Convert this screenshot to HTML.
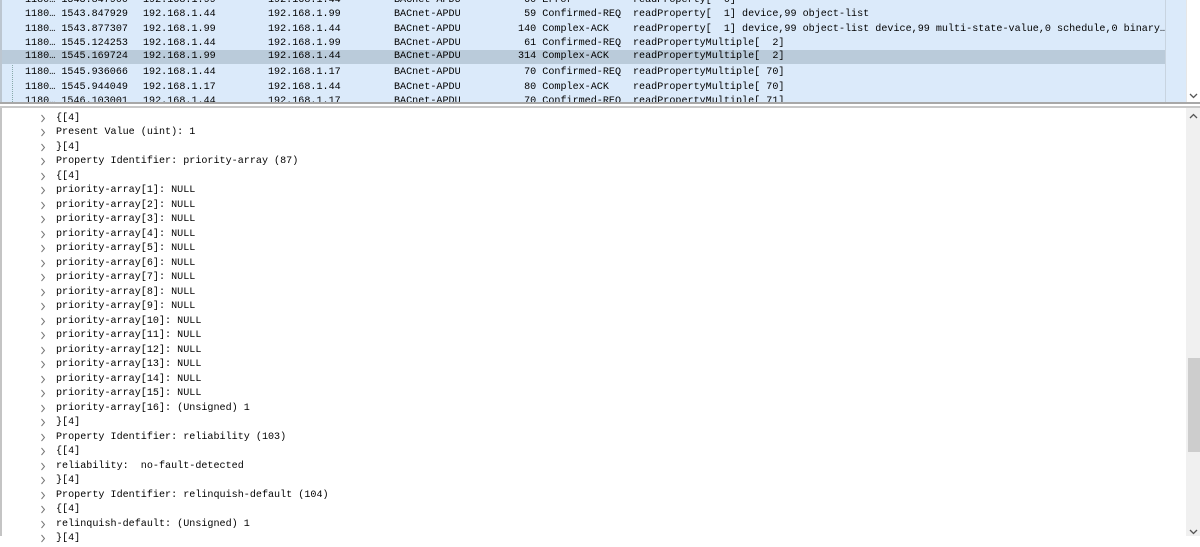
<!DOCTYPE html>
<html><head><meta charset="utf-8"><style>
*{margin:0;padding:0;box-sizing:border-box}
body{width:1200px;height:536px;overflow:hidden;background:#fff;font-family:"Liberation Mono","DejaVu Sans Mono",monospace;font-size:10.1px;color:#000;position:relative}
#top{position:absolute;left:0;top:0;width:1200px;height:104px;background:#dbeafa;overflow:hidden;border-left:2px solid #bcc6d0}
.r{position:absolute;left:0;width:1163px;height:14.5px;line-height:14.5px;white-space:pre}
.r.sel{background:#bacbda}
.r span{position:absolute;top:0}
#vsep{position:absolute;left:1163px;top:0;width:1px;height:102px;background:#c8d4e0}
#sb1{position:absolute;left:1186px;top:0;width:14px;height:102px;background:#fff;border-left:1px solid #e6e6e6}
#div1{position:absolute;left:0;top:102px;width:1200px;height:2px;background:#a8a8a8}
#div2{position:absolute;left:0;top:106px;width:1200px;height:2px;background:#c8c8c8}
#bot{position:absolute;left:0;top:108px;width:1200px;height:428px;border-left:2px solid #c4c4c4}
.l{position:absolute;left:56px;white-space:pre;line-height:14.5px}
.a{position:absolute;left:40px;width:8px;height:14.5px}
.a svg{position:absolute;left:0;top:2px}
#sb2{position:absolute;left:1186px;top:108px;width:14px;height:428px;background:#f0f0f0}
#thumb{position:absolute;left:1188px;top:358px;width:12px;height:94px;background:#cdcdcd}
.ar{position:absolute;left:1189px}
#dots{position:absolute;left:10px;top:52px;height:52px;border-left:1px dotted #8aa}
</style></head><body>
<div id="top">
<div id="dots"></div>
<div class="r" style="top:-6.5px"><span style="left:23px">1180… 1543.847900</span><span style="left:141px">192.168.1.99</span><span style="left:266px">192.168.1.44</span><span style="left:392px">BACnet-APDU</span><span style="left:516px"> 60 Error</span><span style="left:631px">readProperty[  0]</span></div>
<div class="r" style="top:8px"><span style="left:23px">1180… 1543.847929</span><span style="left:141px">192.168.1.44</span><span style="left:266px">192.168.1.99</span><span style="left:392px">BACnet-APDU</span><span style="left:510px">  59 Confirmed-REQ</span><span style="left:631px">readProperty[  1] device,99 object-list</span></div>
<div class="r" style="top:22.5px"><span style="left:23px">1180… 1543.877307</span><span style="left:141px">192.168.1.99</span><span style="left:266px">192.168.1.44</span><span style="left:392px">BACnet-APDU</span><span style="left:510px"> 140 Complex-ACK</span><span style="left:631px">readProperty[  1] device,99 object-list device,99 multi-state-value,0 schedule,0 binary…</span></div>
<div class="r" style="top:37px"><span style="left:23px">1180… 1545.124253</span><span style="left:141px">192.168.1.44</span><span style="left:266px">192.168.1.99</span><span style="left:392px">BACnet-APDU</span><span style="left:510px">  61 Confirmed-REQ</span><span style="left:631px">readPropertyMultiple[  2]</span></div>
<div class="r sel" style="top:49.5px;height:14.5px;padding-top:2px;line-height:12px"><span style="left:23px;top:1.5px">1180… 1545.169724</span><span style="left:141px;top:1.5px">192.168.1.99</span><span style="left:266px;top:1.5px">192.168.1.44</span><span style="left:392px;top:1.5px">BACnet-APDU</span><span style="left:510px;top:1.5px"> 314 Complex-ACK</span><span style="left:631px;top:1.5px">readPropertyMultiple[  2]</span></div>
<div class="r" style="top:66px"><span style="left:23px">1180… 1545.936066</span><span style="left:141px">192.168.1.44</span><span style="left:266px">192.168.1.17</span><span style="left:392px">BACnet-APDU</span><span style="left:510px">  70 Confirmed-REQ</span><span style="left:631px">readPropertyMultiple[ 70]</span></div>
<div class="r" style="top:80.5px"><span style="left:23px">1180… 1545.944049</span><span style="left:141px">192.168.1.17</span><span style="left:266px">192.168.1.44</span><span style="left:392px">BACnet-APDU</span><span style="left:510px">  80 Complex-ACK</span><span style="left:631px">readPropertyMultiple[ 70]</span></div>
<div class="r" style="top:95px"><span style="left:23px">1180… 1546.103001</span><span style="left:141px">192.168.1.44</span><span style="left:266px">192.168.1.17</span><span style="left:392px">BACnet-APDU</span><span style="left:510px">  70 Confirmed-REQ</span><span style="left:631px">readPropertyMultiple[ 71]</span></div>
<div id="vsep"></div>
</div>
<div id="sb1"></div>
<svg class="ar" style="top:93px" width="9" height="6"><path d="M1 1L4.5 4.5L8 1" stroke="#555" stroke-width="1.3" fill="none"/></svg>
<div id="div1"></div><div id="div2"></div>
<div id="bot"></div>
<div id="sb2"></div><div id="thumb"></div>
<svg class="ar" style="top:113px" width="9" height="6"><path d="M1 5L4.5 1.5L8 5" stroke="#555" stroke-width="1.3" fill="none"/></svg>
<svg class="ar" style="top:529px" width="9" height="6"><path d="M1 1L4.5 4.5L8 1" stroke="#555" stroke-width="1.3" fill="none"/></svg>
<div id="lines"></div>
<script>
var L=["{[4]","Present Value (uint): 1","}[4]","Property Identifier: priority-array (87)","{[4]"];
for(var i=1;i<=16;i++)L.push("priority-array["+i+"]: "+(i==16?"(Unsigned) 1":"NULL"));
L=L.concat(["}[4]","Property Identifier: reliability (103)","{[4]","reliability:  no-fault-detected","}[4]","Property Identifier: relinquish-default (104)","{[4]","relinquish-default: (Unsigned) 1","}[4]"]);
var h="";for(var j=0;j<L.length;j++){var t=111.5+j*14.5;h+='<div class="a" style="top:'+t+'px"><svg width="6" height="9"><path d="M1.5 1L4.5 4.5L1.5 8" stroke="#777" stroke-width="1" fill="none"/></svg></div><div class="l" style="top:'+t+'px">'+L[j].replace(/</g,"&lt;")+'</div>';}
document.getElementById("lines").innerHTML=h;
</script>
</body></html>
